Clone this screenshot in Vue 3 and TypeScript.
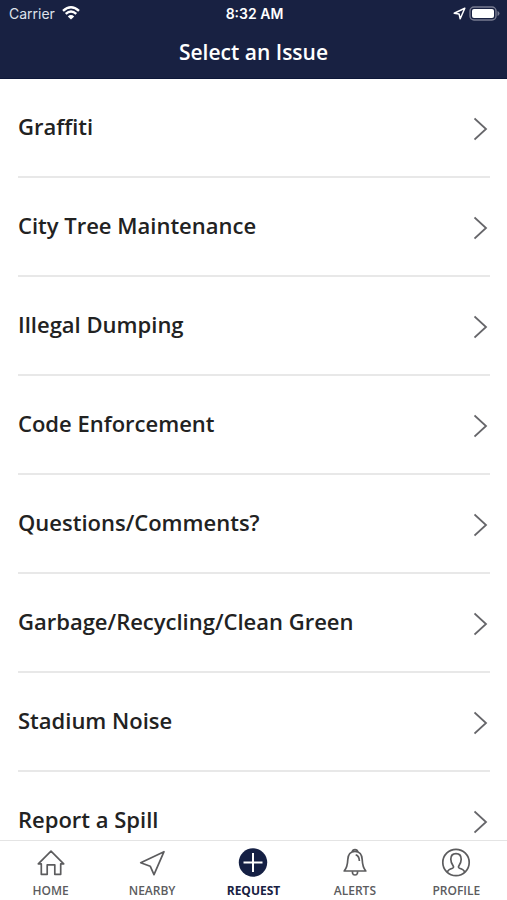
<script setup lang="ts">
import { ref } from 'vue'

type TabId = 'home' | 'nearby' | 'request' | 'alerts' | 'profile'

interface Tab {
  id: TabId
  label: string
}

const issues: string[] = [
  'Graffiti',
  'City Tree Maintenance',
  'Illegal Dumping',
  'Code Enforcement',
  'Questions/Comments?',
  'Garbage/Recycling/Clean Green',
  'Stadium Noise',
  'Report a Spill',
]

const tabs: Tab[] = [
  { id: 'home', label: 'HOME' },
  { id: 'nearby', label: 'NEARBY' },
  { id: 'request', label: 'REQUEST' },
  { id: 'alerts', label: 'ALERTS' },
  { id: 'profile', label: 'PROFILE' },
]

const activeTab = ref<TabId>('request')
</script>

<template>
  <div class="screen">
    <header class="header">
      <div class="status">
        <div class="status-side">
          <span>Carrier</span>
          <svg class="wifi" width="18" height="14" viewBox="0 0 18 14" aria-hidden="true">
            <path d="M1 4.9Q9-2.3 17 4.9" />
            <path d="M3.7 7.9Q9 3.3 14.3 7.9" />
            <path class="solid" d="M9 13.6 5.8 10.4Q9 7.8 12.2 10.4Z" />
          </svg>
        </div>
        <span class="time">8:32 AM</span>
        <div class="status-side end">
          <svg width="13" height="13" viewBox="0 0 13 13" aria-hidden="true">
            <path class="locate" d="M11.8 1.2 1.2 6.2 6.1 7.1 7.2 11.8Z" />
          </svg>
          <svg width="31" height="15" viewBox="0 0 31 15" aria-hidden="true">
            <rect class="shell" x="1" y="1" width="26" height="13" rx="4" />
            <rect class="charge" x="3" y="3" width="22" height="9" rx="2" />
            <path class="cap" d="M28.5 5V10Q30.5 9.4 30.5 7.5T28.5 5Z" />
          </svg>
        </div>
      </div>
      <h1 class="title">Select an Issue</h1>
    </header>

    <main class="content">
      <ul class="issues">
        <li v-for="issue in issues" :key="issue">
          <button type="button" class="issue">
            <span>{{ issue }}</span>
            <svg class="chevron" width="16" height="24" viewBox="0 0 16 24" aria-hidden="true">
              <path d="M0.5 1.5 12 12 0.5 22.5" />
            </svg>
          </button>
        </li>
      </ul>
    </main>

    <nav class="tabs">
      <button
        v-for="tab in tabs"
        :key="tab.id"
        type="button"
        class="tab"
        :class="{ active: tab.id === activeTab }"
        @click="activeTab = tab.id"
      >
        <svg class="tab-icon" width="30" height="30" viewBox="0 0 30 30" aria-hidden="true">
          <g v-if="tab.id === 'home'">
            <path d="M2.3 15.8 15 3.2 27.7 15.8H24.7V26.3H18.8V16.8H11.2V26.3H5.3V15.8Z" />
          </g>
          <g v-else-if="tab.id === 'nearby'">
            <path d="M27 3.7 3.7 14.7 13.2 18.2 17 26.7Z" />
          </g>
          <g v-else-if="tab.id === 'request'">
            <circle class="disc" cx="15" cy="14.5" r="14.2" />
            <path class="plus" d="M15 5V24M5.5 14.5H24.5" />
          </g>
          <g v-else-if="tab.id === 'alerts'">
            <path d="M12.2 4Q12.6 1.7 15 1.7T17.8 4" />
            <path d="M15 3.3C10.5 3.3 8 6.8 7.8 11.5C7.6 16.5 7 19.8 4.2 23H25.8C23 19.8 22.4 16.5 22.2 11.5C22 6.8 19.5 3.3 15 3.3Z" />
            <path d="M12.5 23.2V25.1Q13 27 15 27T17.5 25.1V23.2M15.7 6.8C18.3 7.4 19.3 9.6 19.4 13" />
          </g>
          <g v-else>
            <circle cx="15" cy="14.5" r="13.2" />
            <path d="M6.2 24C7.2 21.5 9 20.9 11.5 20.2Q13.1 19.6 12.2 18C10.3 15.5 9.8 13.5 9.8 11.3C9.8 7.6 12 5.7 15 5.7S20.2 7.6 20.2 11.3C20.2 13.5 19.7 15.5 17.8 18Q16.9 19.6 18.5 20.2C21 20.9 22.8 21.5 23.8 24" />
          </g>
        </svg>
        <span>{{ tab.label }}</span>
      </button>
    </nav>
  </div>
</template>

<style>
body {
  margin: 0;
}
</style>

<style scoped>
.screen {
  display: flex;
  flex-direction: column;
  height: 100vh;
  overflow: hidden;
  background: #fff;
  color: #222;
  font-family: 'Open Sans', 'Noto Sans', sans-serif;
}

.header {
  flex: none;
  padding-bottom: 12px;
  border-bottom: 1px solid #0d1738;
  background: #182142;
  color: #fff;
}

.status {
  display: grid;
  grid-template-columns: 1fr auto 1fr;
  align-items: center;
  height: 26px;
  padding: 0 7px 0 9px;
  font-family: Inter, Roboto, sans-serif;
  font-size: 14px;
}

.status-side {
  display: flex;
  align-items: center;
  gap: 7px;
  color: #dfe2eb;
}

.end {
  justify-content: flex-end;
  gap: 3px;
}

.time {
  font-weight: 600;
}

.wifi path {
  fill: none;
  stroke: #fff;
  stroke-width: 2.4;
}

.wifi .solid {
  fill: #fff;
  stroke: none;
}

.locate {
  fill: none;
  stroke: #fff;
  stroke-width: 1.5;
  stroke-linejoin: round;
}

.shell {
  fill: none;
  stroke: #777b91;
  stroke-width: 1.4;
}

.charge {
  fill: #fff;
}

.cap {
  fill: #777b91;
}

.title {
  margin: 0;
  padding-top: 12px;
  font-size: 21px;
  font-weight: 600;
  line-height: 28px;
  text-align: center;
}

.content {
  flex: 1;
  min-height: 0;
  overflow: hidden;
}

.issues {
  margin: 0;
  padding: 0 17px 0 18px;
  list-style: none;
}

.issue {
  display: flex;
  align-items: center;
  justify-content: space-between;
  box-sizing: border-box;
  width: 100%;
  height: 99px;
  padding: 0 0 4px;
  border: 0;
  border-bottom: 2px solid #e8e8e8;
  background: none;
  color: #222;
  font: 600 22px/30px 'Open Sans', 'Noto Sans', sans-serif;
  text-align: left;
}

.chevron {
  margin-top: 6px;
  fill: none;
  stroke: #66666a;
  stroke-width: 1.8;
}

.tabs {
  display: grid;
  grid-template-columns: repeat(5, 1fr);
  flex: none;
  border-top: 1px solid #e4e4e4;
  background: #fff;
}

.tab {
  display: flex;
  flex-direction: column;
  align-items: center;
  gap: 5px;
  padding: 7px 0 1px;
  border: 0;
  background: none;
  color: #5c5c5e;
  font: 600 12px/16px 'Open Sans', 'Noto Sans', sans-serif;
}

.tab.active {
  color: #182142;
  font-weight: 700;
}

.tab-icon {
  fill: none;
  stroke: #5c5c5e;
  stroke-width: 1.7;
  stroke-linejoin: round;
}

.disc {
  fill: #152044;
  stroke: none;
}

.plus {
  stroke: #fff;
  stroke-width: 2;
}
</style>
